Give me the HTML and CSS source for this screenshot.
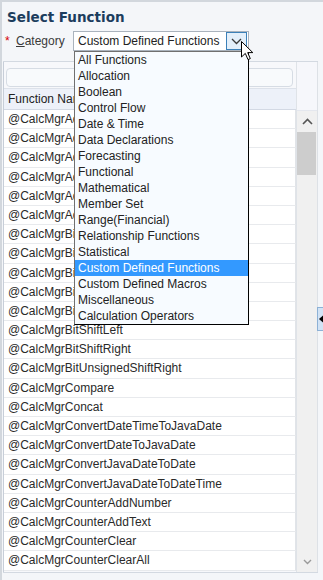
FILE: index.html
```html
<!DOCTYPE html>
<html lang="en">
<head>
    <meta charset="UTF-8">
    <meta name="viewport" content="width=device-width, initial-scale=1.0">
    <title>Select Function</title>
    <link rel="stylesheet" href="styles.css">
</head>
<body>
    <div id="dialog">
        <h2 class="title">Select Function</h2>

        <div class="field">
            <span class="req">*</span>
            <label class="label"><u>C</u>ategory</label>
            <div class="select">
                <span class="select-text">Custom Defined Functions</span>
                <span class="select-btn">
                    <svg width="11" height="7" viewBox="0 0 11 7"><path d="M1 1 L5.5 5.5 L10 1" fill="none" stroke="#3a3a3a" stroke-width="1.3"/></svg>
                </span>
            </div>
        </div>

        <div class="panel">
            <div class="table">
                <div class="filter-row"><div class="filter"></div></div>
                <div class="thead">Function Name</div>
                <div class="tbody">
                    <div class="row">@CalcMgrAddDate</div>
                    <div class="row">@CalcMgrAddDatePart</div>
                    <div class="row">@CalcMgrAddDays</div>
                    <div class="row">@CalcMgrAddMonths</div>
                    <div class="row">@CalcMgrAddWeeks</div>
                    <div class="row">@CalcMgrAddYears</div>
                    <div class="row">@CalcMgrBitAnd</div>
                    <div class="row">@CalcMgrBitCompliment</div>
                    <div class="row">@CalcMgrBitExOr</div>
                    <div class="row">@CalcMgrBitNot</div>
                    <div class="row">@CalcMgrBitOr</div>
                    <div class="row">@CalcMgrBitShiftLeft</div>
                    <div class="row">@CalcMgrBitShiftRight</div>
                    <div class="row">@CalcMgrBitUnsignedShiftRight</div>
                    <div class="row">@CalcMgrCompare</div>
                    <div class="row">@CalcMgrConcat</div>
                    <div class="row">@CalcMgrConvertDateTimeToJavaDate</div>
                    <div class="row">@CalcMgrConvertDateToJavaDate</div>
                    <div class="row">@CalcMgrConvertJavaDateToDate</div>
                    <div class="row">@CalcMgrConvertJavaDateToDateTime</div>
                    <div class="row">@CalcMgrCounterAddNumber</div>
                    <div class="row">@CalcMgrCounterAddText</div>
                    <div class="row">@CalcMgrCounterClear</div>
                    <div class="row">@CalcMgrCounterClearAll</div>
                </div>
            </div>
            <div class="side">
                <div class="side-top"></div>
                <div class="scrollbar">
                    <div class="sb-btn">
                        <svg width="11" height="7" viewBox="0 0 11 7"><path d="M1 6 L5.5 1.5 L10 6" fill="none" stroke="#555" stroke-width="1.6"/></svg>
                    </div>
                    <div class="sb-thumb"></div>
                    <div class="sb-track"></div>
                    <div class="sb-btn">
                        <svg width="9" height="6" viewBox="0 0 9 6"><path d="M1 1 L4.5 4.5 L8 1" fill="none" stroke="#9a9a9a" stroke-width="1.4"/></svg>
                    </div>
                </div>
            </div>
        </div>

        <!-- lista abierta del select -->
        <ul class="dropdown">
            <li>All Functions</li>
            <li>Allocation</li>
            <li>Boolean</li>
            <li>Control Flow</li>
            <li>Date &amp; Time</li>
            <li>Data Declarations</li>
            <li>Forecasting</li>
            <li>Functional</li>
            <li>Mathematical</li>
            <li>Member Set</li>
            <li>Range(Financial)</li>
            <li>Relationship Functions</li>
            <li>Statistical</li>
            <li class="selected">Custom Defined Functions</li>
            <li>Custom Defined Macros</li>
            <li>Miscellaneous</li>
            <li>Calculation Operators</li>
        </ul>

        <svg class="cursor" width="13" height="20" viewBox="0 0 13 20">
            <path d="M0.5 0.5 L0.5 16 L4.3 12.4 L7 18.6 L9.3 17.6 L6.7 11.6 L11.8 11.6 Z" fill="#fff" stroke="#000" stroke-width="1"/>
        </svg>

        <div class="side-tab">
            <svg width="5" height="8" viewBox="0 0 5 8"><path d="M4.5 0 L0 4 L4.5 8 Z" fill="#000"/></svg>
        </div>
    </div>
</body>
</html>
```

FILE: styles.css
```css
body {
    margin: 0;
    padding: 0;
    font-family: "Liberation Sans", Arial, sans-serif;
    font-size: 12px;
    color: #222;
    background: #f4f6f9;
}
#dialog {
    position: relative;
    height: 580px;
    box-sizing: border-box;
    border-top: 2px solid #d2d7dd;
    border-left: 2px solid #d2d7dd;
    background: #f4f6f9;
    overflow: hidden;
}
.title {
    margin: 0;
    padding: 7px 0 0 5px;
    font-family: "DejaVu Sans", sans-serif;
    font-size: 13.5px;
    line-height: 16px;
    font-weight: bold;
    color: #1c3d5d;
}
.field {
    display: flex;
    align-items: center;
    height: 20px;
    margin-top: 6px;
    padding-left: 3px;
}
.req {
    width: 11px;
    color: #d40000;
    font-size: 12px;
    line-height: 20px;
}
.label {
    width: 57px;
    color: #3a3a3a;
    line-height: 20px;
}
.select {
    display: flex;
    align-items: center;
    width: 176px;
    height: 20px;
    box-sizing: border-box;
    border: 1px solid #aab3bd;
    background: #fff;
}
.select-text {
    padding-left: 4px;
    color: #222;
}
.select-btn {
    display: flex;
    align-items: center;
    justify-content: center;
    margin-left: auto;
    margin-right: 1px;
    width: 21px;
    height: 18px;
    box-sizing: border-box;
    border: 1px solid #3b80b8;
    background: #e3effa;
}
.panel {
    display: flex;
    margin: 10px 0 0 1px;
    width: 315px;
    height: 512px;
    box-sizing: border-box;
    border-top: 1px solid #d3d9e1;
    border-bottom: 1px solid #d3d9e1;
}
.table {
    width: 293px;
    box-sizing: border-box;
    border-left: 1px solid #c7ced8;
    background: #f7f8fb;
}
.filter-row {
    padding: 6px 3px 1px 2px;
}
.filter {
    height: 19px;
    box-sizing: border-box;
    border: 1px solid #d6dce4;
    border-radius: 4px;
    background: #f8fafc;
}
.thead {
    height: 22px;
    box-sizing: border-box;
    padding-left: 4px;
    line-height: 20px;
    border-top: 1px solid #dde2ea;
    border-bottom: 1px solid #d3d9e4;
    background: #edf1f9;
    color: #222;
}
.row {
    height: 18.2px;
    line-height: 18.2px;
    padding-left: 4px;
    border-bottom: 1px solid #e8eaed;
    border-right: 1px solid #e1e4e8;
    background: #fff;
    color: #2a2a2a;
    white-space: nowrap;
    overflow: hidden;
}
.side {
    display: flex;
    flex-direction: column;
    width: 22px;
    box-sizing: border-box;
    border-left: 1px solid #dfe3e8;
    border-right: 1px solid #dde1e6;
}
.side-top {
    height: 48px;
    background: #f6f7fb;
    border-bottom: 1px solid #e4e7ee;
}
.scrollbar {
    display: flex;
    flex-direction: column;
    height: 461px;
    background: #f0f0f0;
}
.sb-btn {
    display: flex;
    align-items: center;
    justify-content: center;
    height: 21px;
}
.sb-thumb {
    height: 43px;
    margin: 0 1px 0 0;
    background: #cdcdcd;
}
.sb-track {
    flex: 1;
}
.dropdown {
    position: absolute;
    left: 72px;
    top: 49px;
    width: 175px;
    margin: 0;
    padding: 0;
    list-style: none;
    box-sizing: border-box;
    border: 1px solid #707070;
    border-right-color: #000;
    border-bottom-color: #000;
    background: #f7fbff;
}
.dropdown li {
    height: 16px;
    line-height: 16px;
    padding-left: 3px;
    color: #222;
    white-space: nowrap;
}
.dropdown li.selected {
    background: #3399ff;
    color: #fff;
}
.cursor {
    position: absolute;
    left: 239px;
    top: 39px;
}
.side-tab {
    position: absolute;
    left: 315px;
    top: 305px;
    width: 7px;
    height: 24px;
    box-sizing: border-box;
    display: flex;
    align-items: center;
    justify-content: center;
    border: 1px solid #8db1d6;
    border-right: none;
    background: #d2e3f5;
}
```
